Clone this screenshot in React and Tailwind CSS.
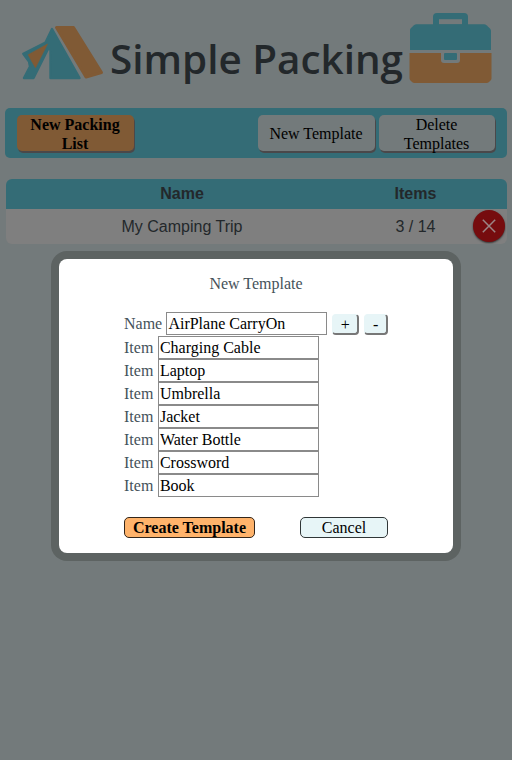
const ITEMS = ["Charging Cable", "Laptop", "Umbrella", "Jacket", "Water Bottle", "Crossword", "Book"];

const serif = "font-['Liberation_Serif','Times_New_Roman',serif]";
const sans = "font-['Liberation_Sans',Arial,sans-serif]";

function Tent() {
  return (
    <svg width="84" height="58" viewBox="0 0 84 58" className="mt-[24px] ml-[21px] shrink-0">
      <g strokeLinejoin="round">
        <path d="M31 5 L58.500 54 H29.500 V25 L27 25 L12.500 54 H3 L9 42.500 L8 37.500 L2.300 29.800 L24.500 18.500 Z" fill="#346c76" stroke="#346c76" strokeWidth="2.400" />
        <path d="M7.200 30.700 L26.500 20 L14.500 43.800 L10.500 37 Z" fill="#805a35" stroke="#805a35" strokeWidth="0.600" />
        <path d="M35.500 3.500 H52.500 L80.500 48.500 L65 53 Z" fill="#805a35" stroke="#805a35" strokeWidth="3" />
      </g>
    </svg>
  );
}

function Briefcase() {
  return (
    <svg width="83" height="70" viewBox="0 0 83 70" className="absolute left-[409px] top-[13px]">
      <path d="M24 13 V4 Q24 0 28 0 H55 Q59 0 59 4 V13 Z" fill="#346c76" />
      <path d="M30 6.200 H53 V11.500 H30 Z" fill="#737a7b" />
      <path d="M1 37 V17 Q1 16 2 15 L5 12.200 Q6 11.300 7.500 11.300 H75 Q76.500 11.300 77.500 12.200 L81 15.500 Q82 16.500 82 18 V37 Z" fill="#346c76" />
      <path d="M0.500 40 H82.500 V65.500 Q82.500 66.500 81.500 67.500 L80 69 Q79 70 77.500 70 H5.500 Q4 70 3 69 L1.500 67.500 Q0.500 66.500 0.500 65 Z" fill="#805a35" />
      <path d="M32 39 H51 V47 Q51 50 48 50 H35 Q32 50 32 47 Z" fill="#737a7b" />
      <rect x="35" y="40" width="13" height="7" rx="1" fill="#346c76" />
    </svg>
  );
}

function BarButton({ children, className }) {
  return (
    <button className={`h-[36px] rounded-[5px] text-[16px] leading-[19px] text-black shadow-[1px_2px_0_#4a484a] ${className}`}>
      {children}
    </button>
  );
}

function Field({ label, value, inputClass }) {
  return (
    <label className="flex h-[23.170px] items-center">
      <span>{label}</span>
      <input defaultValue={value} className={`h-[23px] w-[161px] border border-[#8a8a8a] bg-white px-px text-[16px] text-black outline-none ${inputClass}`} />
    </label>
  );
}

export default function App() {
  return (
    <div className={`relative h-[760px] w-[512px] overflow-hidden bg-[#737a7b] ${serif}`}>
      <header className="relative flex h-[108px]">
        <Tent />
        <h1 className="ml-[5px] mt-[32px] whitespace-nowrap font-['Open_Sans',sans-serif] text-[40.400px] font-semibold leading-[54px] text-[#23282b]">
          Simple Packing
        </h1>
        <Briefcase />
      </header>

      <nav className="mx-[5px] flex h-[50px] items-start rounded-[5px] bg-[#346c76] px-[12px] pt-[7px]">
        <BarButton className="w-[117px] bg-[#805a35] pl-2 pr-[9px] font-bold">New Packing List</BarButton>
        <BarButton className="ml-auto w-[117px] bg-[#737a7b] pr-px">New Template</BarButton>
        <BarButton className="ml-[4px] w-[116px] bg-[#737a7b] pl-4 pr-[17px]">Delete Templates</BarButton>
      </nav>

      <section className={`mx-[6px] mr-[5px] mt-[21px] overflow-hidden rounded-[6px] text-[16px] text-[#23282b] ${sans}`}>
        <div className="flex h-[30px] items-center bg-[#346c76] text-center font-bold">
          <span className="w-[352px]">Name</span>
          <span className="w-[115px]">Items</span>
        </div>
        <div className="flex h-[35px] items-center bg-[#7f7f7f] text-center">
          <span className="w-[352px]">My Camping Trip</span>
          <span className="w-[115px]">3 / 14</span>
          <button className="mb-px flex size-[32px] items-center justify-center rounded-full bg-[#760c0e] shadow-[0_1px_2px_#333]">
            <svg width="14" height="14" viewBox="0 0 14 14" stroke="#9b8585" strokeWidth="1.500">
              <path d="M0.800 0.800 L13.200 13.200 M13.200 0.800 L0.800 13.200" />
            </svg>
          </button>
        </div>
      </section>

      <div className="absolute left-[51px] top-[251px] h-[310px] w-[410px] rounded-[16px] bg-[#5d6362] p-[8px]">
        <div className="h-[294px] rounded-[8px] bg-white pl-[65px] pr-[65px] pt-[16px] text-[16px] leading-[18px] text-[#45525a]">
          <h2 className="text-center">New Template</h2>
          <div className="mt-[19px] flex">
            <Field label="Name" value="AirPlane CarryOn" inputClass="ml-[4.200px]" />
            <button className="ml-[4.800px] mt-[2px] h-[21px] w-[27px] rounded-[4px] border border-b-2 border-r-2 border-[#e7f5f7] border-b-[#777] border-r-[#777] bg-[#e7f5f7] leading-[17px] text-black">+</button>
            <button className="ml-[5px] mt-[2px] h-[21px] w-[24px] rounded-[4px] border border-b-2 border-r-2 border-[#e7f5f7] border-b-[#777] border-r-[#777] bg-[#e7f5f7] leading-[17px] text-black">-</button>
          </div>
          <div className="pt-[0.300px]">
            {ITEMS.map((item) => (
              <Field key={item} label={<span className="block pt-px">Item</span>} value={item} inputClass="ml-[4.600px] pt-px" />
            ))}
          </div>
          <div className="mt-[19.700px] flex justify-between">
            <button className="h-[21px] w-[131px] rounded-[5px] border border-[#33261b] bg-[#ffb36b] font-bold text-black">Create Template</button>
            <button className="h-[21px] w-[88px] rounded-[5px] border border-[#303637] bg-[#e7f5f7] text-black">Cancel</button>
          </div>
        </div>
      </div>
    </div>
  );
}
